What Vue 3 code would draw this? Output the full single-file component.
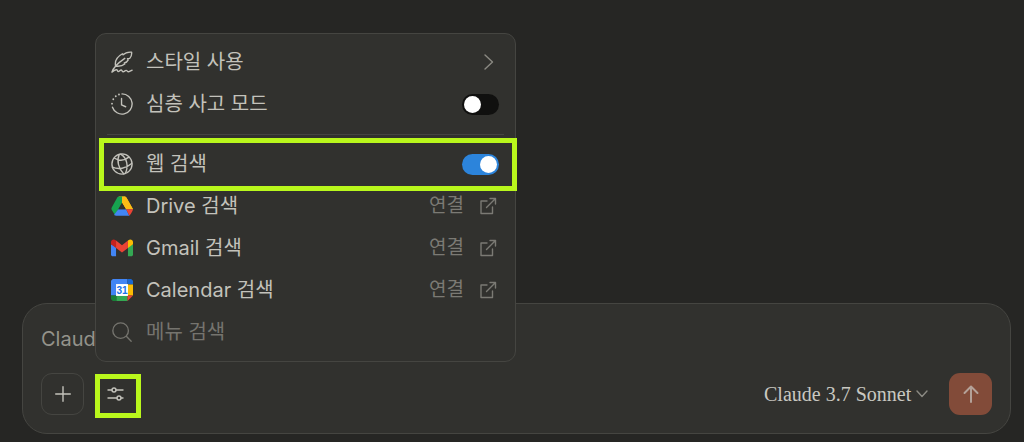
<script setup>
import { ref } from 'vue'

const thinking = ref(false)
const webSearch = ref(true)
const model = ref('Claude 3.7 Sonnet')
const prompt = ref('')
const query = ref('')
const connectors = [
  { id: 'drive', label: 'Drive 검색' },
  { id: 'gmail', label: 'Gmail 검색' },
  { id: 'calendar', label: 'Calendar 검색' },
]
</script>

<template>
  <main class="page">
    <form class="composer" @submit.prevent>
      <input v-model="prompt" class="prompt" type="text" placeholder="Claude" aria-label="Claude" />
      <div class="toolbar">
        <button class="square" type="button" aria-label="추가">
          <svg width="16" height="16" viewBox="0 0 16 16" class="line"><path d="M8 .7v14.600M.7 8h14.600" /></svg>
        </button>
        <div class="anchor">
          <button class="square plain marked" type="button" aria-label="도구" aria-expanded="true">
            <svg width="18" height="16" viewBox="0 0 18 16" class="line">
              <path d="M1 4h4M9 4h7M1 12h9M14 12h2" />
              <circle cx="7" cy="4" r="2" /><circle cx="12" cy="12" r="2" />
            </svg>
          </button>

          <section class="menu" aria-label="도구">
            <button class="row" type="button">
              <svg class="icon line" viewBox="0 0 24 24">
                <path d="M1 23c1.500-5 6-9.500 14-15M5 16.500C4 11.500 6 6.500 12.500 3l.7 1.200C15.500 1.800 19 1 22.500 1.300c.3 3.200-.5 5.200-2 6.700l-2.500.5.8 1.200c-1 2-2 3-4.300 3.300l.5 1.300c-2.500 2.200-5.500 2.700-10 2.200M1 23c2-1.500 4-3 5.500-2.500.8.5.5 2 1.500 2 1.200 0 1.800-1.800 3-1.800s1 2 2.300 2 1.900-1.500 3.200-1.500 1.200 1.500 2.500 1.500 2-1.200 4-1.700" />
              </svg>
              <span class="label">스타일 사용</span>
              <svg class="chevron line" width="10" height="16" viewBox="0 0 10 16"><path d="m1 1 7.500 7L1 15" /></svg>
            </button>

            <label class="row">
              <svg class="icon line" viewBox="0 0 24 24">
                <path d="M12 1a11 11 0 1 1-10.400 14.500M11.500 6v7l4.500 2" />
                <path class="dots" d="M1.100 11.500v.1M2.500 6.700v.1M5.200 3.400v.1M8.700 1.500v.1" />
              </svg>
              <span class="label">심층 사고 모드</span>
              <input v-model="thinking" class="switch" type="checkbox" role="switch" />
            </label>

            <hr class="rule" />

            <label class="row marked wide">
              <svg class="icon line" viewBox="0 0 24 24">
                <circle cx="12" cy="12" r="11" />
                <path d="M9 1.500C6 8 8 17 14 22.800M10.500 1.200C17.500 5 19.500 15 15.500 22.300M3.500 5.500C8.500 8.800 14.500 8.500 19.500 4.500M1.500 15.500c6.500 2.800 15 1.500 21-4" />
              </svg>
              <span class="label">웹 검색</span>
              <input v-model="webSearch" class="switch" type="checkbox" role="switch" />
            </label>

            <a v-for="item in connectors" :key="item.id" class="row" :href="'#' + item.id">
              <svg v-if="item.id === 'drive'" class="icon" viewBox="0 0 24 24">
                <path fill="#fbbc15" d="M8.300 1.500h6.200c1 0 1.800.5 2.300 1.300L24 15.500h-7.500Z" />
                <path fill="#17a34f" d="M8.500 1.500H12l2.500 0L12 8.700 8 15.500 4.500 22 .7 16c-.4-.8-.4-1.700.1-2.500L7 2.500Z" />
                <path fill="#fbbc15" d="M12 1.500h2.500c1 0 1.800.5 2.300 1.300L24 15.500h-7.500L12 8.500Z" />
                <path fill="#4285f4" d="M8 15.500h8.500l3.500 7H5.500c-1 0-1.500-.3-2-1Z" />
                <path fill="#ea4335" d="M16.500 15.500H24c0 1.300-2.200 4.800-2.700 5.500s-.8 1-1.300 1.500Z" />
                <path fill="#31312e" d="m12 8.700-4 6.800h8Z" />
              </svg>
              <svg v-else-if="item.id === 'gmail'" class="icon" viewBox="0 0 24 24">
                <path fill="#4285f4" d="M0 8v11c0 1 .8 2 2 2h3.500V11Z" />
                <path fill="#34a853" d="M24 8v11c0 1-.8 2-2 2h-3.500V11Z" />
                <path fill="#c5221f" d="M0 5.500C0 3 3 2 5 3.500l.5.4V12L0 8Z" />
                <path fill="#fbbc04" d="M24 5.500C24 3 21 2 19 3.500l-.5.4V12L24 8Z" />
                <path fill="#ea4335" d="M5.500 3.900 12 9l6.500-5.100V12L12 17l-6.500-5Z" />
              </svg>
              <svg v-else class="icon" viewBox="0 0 24 24">
                <path fill="#4285f4" d="M2 0h16v6H6v12H0V2Z" />
                <path fill="#1967d2" d="M18 0h4l2 2v4h-6Z" />
                <path fill="#fbbc04" d="M18 6h6v12h-6Z" />
                <path fill="#188038" d="M0 18h6v6H2l-2-2Z" />
                <path fill="#34a853" d="M6 18h12v6H6Z" />
                <path fill="#ea4335" d="M18 18h6l-6 6Z" />
                <path fill="#fff" d="M5.500 5.500h13v13h-13Z" />
                <text class="day" x="12" y="16" text-anchor="middle">31</text>
              </svg>
              <span class="label">{{ item.label }}</span>
              <span class="connect">연결</span>
              <svg class="external line" width="18" height="18" viewBox="0 0 18 18">
                <path d="M8 4H2v12.500h11.500V10M7.500 10.500l9-9M11 1.500h5.500V7" />
              </svg>
            </a>

            <label class="row faint">
              <svg class="icon line" viewBox="0 0 24 24"><circle cx="10.500" cy="10.500" r="8.500" /><path d="m17 17 5 5" /></svg>
              <input v-model="query" class="search" type="text" placeholder="메뉴 검색" aria-label="메뉴 검색" />
            </label>
          </section>
        </div>

        <label class="model">
          <select v-model="model" aria-label="모델">
            <option>Claude 3.7 Sonnet</option>
          </select>
          <svg class="line" width="12" height="8" viewBox="0 0 12 8"><path d="m1 1 5 5.500L11 1" /></svg>
        </label>
        <button class="square send" type="submit" aria-label="보내기">
          <svg width="16" height="18" viewBox="0 0 16 18"><path d="M8 17V1.500M1.500 8 8 1.500 14.500 8" /></svg>
        </button>
      </div>
    </form>
  </main>
</template>

<style>
body {
  background: #262624;
}
</style>

<style scoped>
.page,
.page * {
  box-sizing: border-box;
}
.page {
  display: flex;
  flex-direction: column;
  justify-content: flex-end;
  min-height: 100vh;
  padding: 0 13px 8px 22px;
  font: 20px/30px Inter, "Noto Sans CJK KR", sans-serif;
  color: #c3c2bb;
}
button,
input,
select {
  margin: 0;
  padding: 0;
  border: 0;
  background: none;
  color: inherit;
  font: inherit;
}
.line {
  fill: none;
  stroke: currentColor;
  stroke-width: 1.4;
  stroke-linecap: round;
  stroke-linejoin: round;
}
.composer {
  display: flex;
  flex-direction: column;
  gap: 19px;
  padding: 20px 18px 18px;
  border: 1px solid #454541;
  border-radius: 25px;
  background: #31312e;
}
.prompt {
  width: 100%;
  height: 30px;
  outline: 0;
}
.prompt::placeholder {
  color: #94938b;
  opacity: 1;
}
.toolbar {
  display: flex;
  align-items: center;
}
.square {
  display: flex;
  align-items: center;
  justify-content: center;
  width: 43px;
  height: 42px;
  border: 1px solid #454541;
  border-radius: 11px;
}
.plain {
  border-color: transparent;
}
.anchor {
  position: relative;
  margin-left: 10px;
}
.marked {
  position: relative;
}
.marked::after {
  content: "";
  position: absolute;
  inset: 0 -5px -4px 0;
  border: 5px solid #b9f71c;
  pointer-events: none;
}
.wide::after {
  inset: -5px -2px -6px 3px;
}
.menu {
  position: absolute;
  bottom: 53px;
  left: 1px;
  z-index: 1;
  width: 421px;
  padding: 7px 0 8px;
  border: 1px solid #454541;
  border-radius: 11px;
  background: #31312e;
}
.row {
  display: flex;
  align-items: center;
  width: 100%;
  height: 42px;
  padding: 0 16px 0 15px;
  color: inherit;
  text-align: left;
  text-decoration: none;
}
.icon {
  flex: none;
  width: 22px;
  height: 22px;
  margin-right: 13px;
}
.icon.line {
  stroke-width: 1.5;
}
.icon .dots {
  stroke-width: 2;
}
.label {
  flex: 1;
}
.day {
  font: bold 11px "Liberation Sans", sans-serif;
  fill: #1a73e8;
}
.chevron {
  margin-right: 5px;
  color: #8b8a83;
}
.connect,
.external {
  color: #7b7a74;
}
.connect {
  font-size: 19px;
}
.external {
  margin: 0 2px 0 15px;
}
.faint {
  color: #75746e;
}
.search {
  flex: 1;
  min-width: 0;
  outline: 0;
}
.search::placeholder {
  color: #75746e;
  opacity: 1;
}
.switch {
  flex: none;
  appearance: none;
  width: 37px;
  height: 21px;
  padding: 2px;
  border-radius: 11px;
  background: #10100f;
}
.switch::before {
  content: "";
  display: block;
  width: 17px;
  height: 17px;
  border-radius: 50%;
  background: #fff;
}
.switch:checked {
  background: #2c84db;
}
.switch:checked::before {
  margin-left: auto;
}
.rule {
  height: 1px;
  margin: 9px 11px 8px;
  border: 0;
  background: #454541;
}
.model {
  display: flex;
  align-items: center;
  gap: 4px;
  margin-left: auto;
  color: #8b8a83;
}
.model select {
  appearance: none;
  color: #c9c8c1;
  font: 20px/30px "Liberation Serif", serif;
}
.send {
  margin-left: 21px;
  border: 0;
  background: #824b39;
}
.send svg {
  fill: none;
  stroke: #b4a198;
  stroke-width: 2;
  stroke-linecap: round;
  stroke-linejoin: round;
}
</style>
